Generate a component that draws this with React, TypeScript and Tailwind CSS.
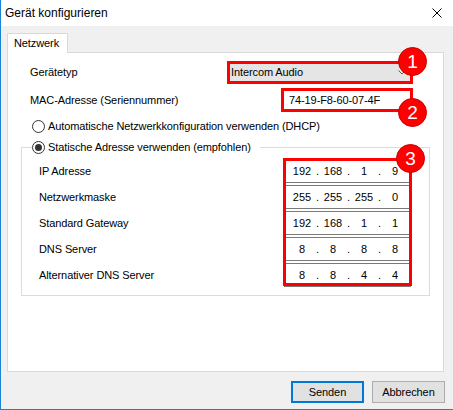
import React from "react";

const FONT = { fontFamily: '"Liberation Sans", Arial, sans-serif' };

function Badge({ n, className }: { n: string; className: string }) {
  return (
    <div
      className={`absolute z-20 w-[29px] h-[29px] rounded-full bg-[#ff0000] border border-[#c80000] flex items-center justify-center text-white text-[19px] leading-none tracking-normal ${className}`}
      style={{ fontFamily: '"Liberation Sans", Arial, sans-serif' }}
    >
      {n}
    </div>
  );
}

function Radio({ checked }: { checked?: boolean }) {
  return (
    <span className="w-[13px] h-[13px] rounded-full border border-[#333] bg-white flex items-center justify-center shrink-0">
      {checked && <span className="w-[7px] h-[7px] rounded-full bg-[#333]" />}
    </span>
  );
}

function IpField({ parts }: { parts: string[] }) {
  return (
    <div className="h-[24px] w-[127px] bg-white border border-[#7a7a7a] flex items-center pl-[4px] text-[11px] tracking-normal text-black">
      {parts.map((p, i) => (
        <React.Fragment key={i}>
          <span className="w-[26px] text-center">{p}</span>
          {i < 3 && <span className="w-[5px] text-center">.</span>}
        </React.Fragment>
      ))}
    </div>
  );
}

export default function App() {
  const rows: { label: string; parts: string[] }[] = [
    { label: "IP Adresse", parts: ["192", "168", "1", "9"] },
    { label: "Netzwerkmaske", parts: ["255", "255", "255", "0"] },
    { label: "Standard Gateway", parts: ["192", "168", "1", "1"] },
    { label: "DNS Server", parts: ["8", "8", "8", "8"] },
    { label: "Alternativer DNS Server", parts: ["8", "8", "4", "4"] },
  ];

  return (
    <div
      className="w-[453px] h-[410px] bg-[#f0f0f0] border-l border-b border-[#1883d7] flex flex-col text-[11px] tracking-[-0.1px] text-black overflow-hidden"
      style={FONT}
    >
      {/* Title bar */}
      <div className="h-[26px] bg-white flex items-center justify-between pl-[4px] pr-[11px] shrink-0">
        <span className="leading-none text-[12px] tracking-normal">Gerät konfigurieren</span>
        <svg width="10" height="10" viewBox="0 0 10 10" className="block">
          <path d="M0.5 0.5 L9.5 9.5 M9.5 0.5 L0.5 9.5" stroke="#000" strokeWidth="1" fill="none" />
        </svg>
      </div>

      {/* Body */}
      <div className="flex flex-col pl-[6px] pt-[7px]">
        {/* Tab strip */}
        <div className="flex">
          <div className="relative z-10 h-[20px] w-[61px] bg-white border border-b-0 border-[#d9d9d9] flex items-center pl-[6px] mb-[-1px]">
            <span className="leading-none">Netzwerk</span>
          </div>
        </div>

        {/* Tab panel */}
        <div className="w-[437px] h-[320px] bg-white border border-[#d9d9d9] flex flex-col">
          {/* Gerätetyp */}
          <div className="flex items-center mt-[8px] h-[23px]">
            <span className="w-[197px] ml-[22px] leading-none">Gerätetyp</span>
            <div className="relative w-[186px] h-[23px] border-[3px] border-[#ff0000] bg-[#e5e5e5] flex items-center justify-between pl-[1px] pr-[4px]">
              <span className="leading-none">Intercom Audio</span>
              <svg width="8" height="5" viewBox="0 0 8 5" className="block">
                <path d="M0.5 0.5 L4 4 L7.5 0.5" stroke="#606060" strokeWidth="1" fill="none" />
              </svg>
              <Badge n="1" className="-right-[17px] -top-[17px]" />
            </div>
          </div>

          {/* MAC */}
          <div className="flex items-center mt-[4px] h-[24px]">
            <span className="w-[251px] ml-[22px] leading-none">MAC-Adresse (Seriennummer)</span>
            <div className="relative w-[132px] h-[24px] border-[3px] border-[#ff0000] bg-white flex items-center pl-[5px]">
              <span className="leading-none">74-19-F8-60-07-4F</span>
              <Badge n="2" className="-right-[17px] -bottom-[18px]" />
            </div>
          </div>

          {/* Radio 1 */}
          <div className="flex items-center gap-[3px] mt-[4px] h-[20px] ml-[24px]">
            <Radio />
            <span className="leading-none">Automatische Netzwerkkonfiguration verwenden (DHCP)</span>
          </div>

          {/* Group box */}
          <fieldset className="ml-[13px] mt-[1px] w-[409px] border border-[#dcdcdc] pb-[8px]">
            <legend className="ml-[10px] pr-[9px] h-[20px] flex items-center gap-[3px]">
              <Radio checked />
              <span className="leading-none">Statische Adresse verwenden (empfohlen)</span>
            </legend>
            <div className="flex mt-[2px] pl-[17px]">
              <div className="flex flex-col gap-[2px] w-[245px]">
                {rows.map((r) => (
                  <div key={r.label} className="h-[24px] flex items-center leading-none">
                    {r.label}
                  </div>
                ))}
              </div>
              <div className="relative flex flex-col gap-[2px]">
                {rows.map((r) => (
                  <IpField key={r.label} parts={r.parts} />
                ))}
                <div className="absolute -left-[1px] -right-[1px] -top-[1px] bottom-[1px] border-[3px] border-[#ff0000] pointer-events-none" />
                <Badge n="3" className="-right-[14px] -top-[15px]" />
              </div>
            </div>
          </fieldset>
        </div>
      </div>

      {/* Buttons */}
      <div className="flex justify-end gap-[8px] pr-[8px] mt-[9px]">
        <button className="w-[73px] h-[22px] bg-[#e1e1e1] border-2 border-[#0078d7] flex items-center justify-center leading-none">
          Senden
        </button>
        <button className="w-[73px] h-[22px] bg-[#e1e1e1] border border-[#adadad] flex items-center justify-center leading-none">
          Abbrechen
        </button>
      </div>
    </div>
  );
}
